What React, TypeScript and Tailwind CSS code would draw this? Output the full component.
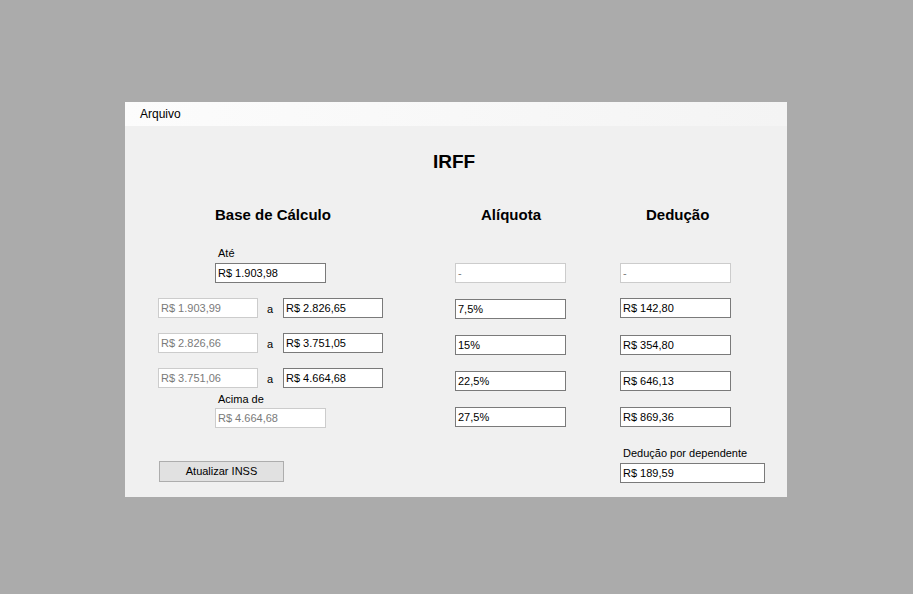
import React from 'react';

const font = { fontFamily: '"Liberation Sans", Arial, sans-serif' };

function Field({ value, w = 'w-[111px]', disabled = false, className = '' }: { value: string; w?: string; disabled?: boolean; className?: string }) {
    return (
        <div
            className={`${w} h-[20px] shrink-0 flex items-center pl-[2px] bg-white border text-[11px] leading-none ${
                disabled ? 'border-[#cccccc] text-[#7a7a7a]' : 'border-[#7a7a7a] text-black'
            } ${className}`}
        >
            {value}
        </div>
    );
}

function RangeRow({ from, to }: { from: string; to: string }) {
    return (
        <div className="flex mt-[15px]">
            <Field value={from} w="w-[100px]" disabled className="ml-[33px]" />
            <div className="w-[25px] flex justify-center pt-[3px] pr-[1px] text-[11px] text-black">a</div>
            <Field value={to} w="w-[100px]" />
        </div>
    );
}

export default function App() {
    return (
        <div className="min-h-screen w-full bg-[#ababab] pt-[102px]" style={font}>
            <div className="w-[662px] h-[395px] ml-[125px] bg-[#f0f0f0] flex flex-col">
                <div className="h-[24px] flex items-center pl-[15px] bg-gradient-to-r from-[#fcfcfc] to-[#f4f4f4] text-[12px] text-black">
                    Arquivo
                </div>

                <div className="mt-[25px] h-[22px] leading-[22px] pl-[308px] text-[19px] font-bold text-black">IRFF</div>

                <div className="mt-[33px] h-[18px] leading-[18px] flex text-[15px] font-bold text-black">
                    <span className="ml-[90px] w-[266px]">Base de Cálculo</span>
                    <span className="w-[165px]">Alíquota</span>
                    <span>Dedução</span>
                </div>

                <div className="mt-[23px] h-[13px] leading-[13px] pl-[93px] text-[11px] text-black">Até</div>

                <div className="flex items-start mt-[3px]">
                    {/* base de cálculo */}
                    <div className="w-[330px] flex flex-col">
                        <div className="flex">
                            <Field value="R$ 1.903,98" className="ml-[90px]" />
                        </div>
                        <RangeRow from="R$ 1.903,99" to="R$ 2.826,65" />
                        <RangeRow from="R$ 2.826,66" to="R$ 3.751,05" />
                        <RangeRow from="R$ 3.751,06" to="R$ 4.664,68" />
                        <div className="mt-[5px] h-[13px] leading-[13px] pl-[93px] text-[11px] text-black">Acima de</div>
                        <div className="flex mt-[2px]">
                            <Field value="R$ 4.664,68" disabled className="ml-[90px]" />
                        </div>
                    </div>

                    {/* alíquota */}
                    <div className="flex flex-col">
                        <Field value="-" disabled />
                        <Field value="7,5%" className="mt-[16px]" />
                        <Field value="15%" className="mt-[16px]" />
                        <Field value="22,5%" className="mt-[16px]" />
                        <Field value="27,5%" className="mt-[16px]" />
                    </div>

                    {/* dedução */}
                    <div className="ml-[54px] flex flex-col">
                        <Field value="-" disabled />
                        <Field value="R$ 142,80" className="mt-[15px]" />
                        <Field value="R$ 354,80" className="mt-[17px]" />
                        <Field value="R$ 646,13" className="mt-[16px]" />
                        <Field value="R$ 869,36" className="mt-[16px]" />
                    </div>
                </div>

                <div className="flex mt-[19px]">
                    <button className="ml-[34px] mt-[14px] w-[125px] h-[21px] bg-[#e1e1e1] border border-[#adadad] text-[11px] text-black leading-none">
                        Atualizar INSS
                    </button>
                    <div className="ml-[336px] flex flex-col">
                        <div className="h-[13px] leading-[13px] pl-[3px] text-[11px] text-black">Dedução por dependente</div>
                        <Field value="R$ 189,59" w="w-[145px]" className="mt-[3px]" />
                    </div>
                </div>
            </div>
        </div>
    );
}
